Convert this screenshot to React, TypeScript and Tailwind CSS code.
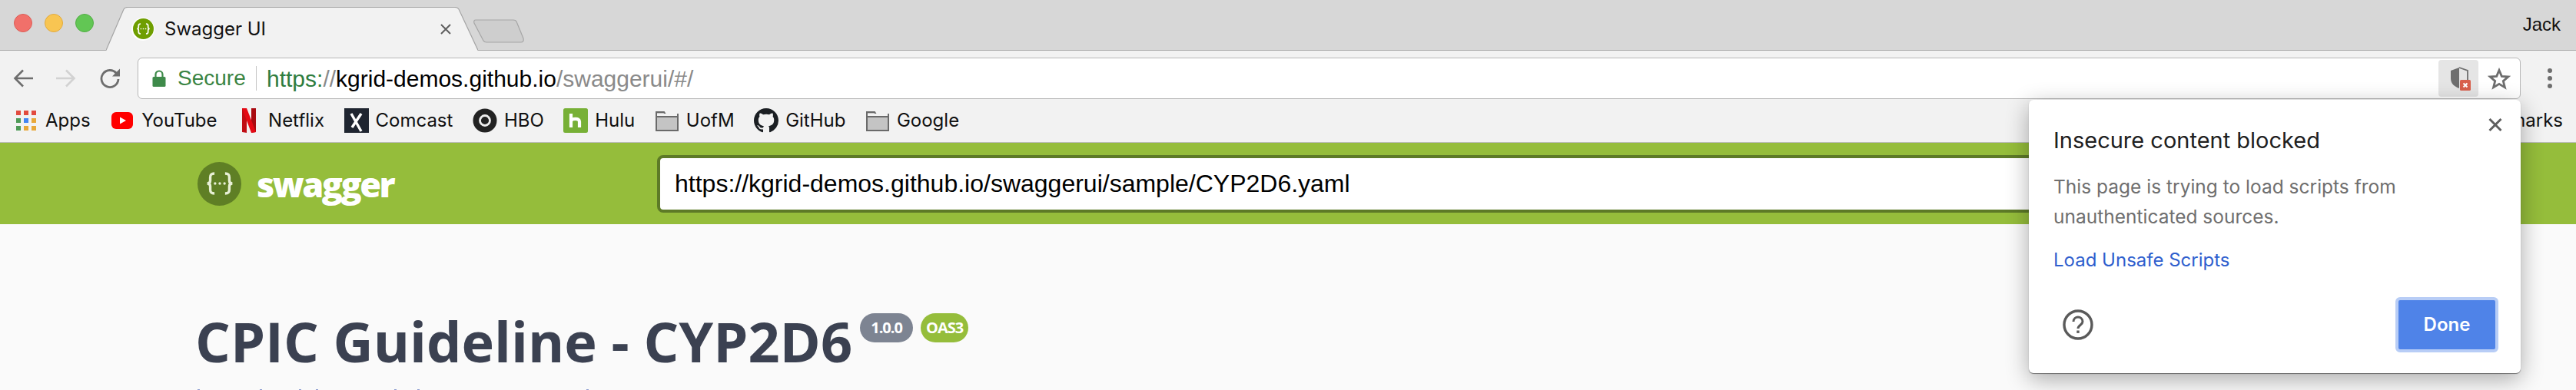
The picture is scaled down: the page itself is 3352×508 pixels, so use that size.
import React from "react";

function Braces({ color, className }: { color: string; className?: string }) {
  return (
    <svg viewBox="0 0 30 30" className={className} fill="none">
      <path d="M10.5 6.5c-3 0-3.6 1.2-3.6 3.4v2.6c0 1.5-.8 2.5-2.6 2.5 1.8 0 2.6 1 2.6 2.5v2.6c0 2.2.6 3.4 3.6 3.4" stroke={color} strokeWidth="2.2" />
      <path d="M19.5 6.5c3 0 3.6 1.2 3.6 3.4v2.6c0 1.5.8 2.5 2.6 2.5-1.8 0-2.6 1-2.6 2.5v2.6c0 2.2-.6 3.4-3.6 3.4" stroke={color} strokeWidth="2.2" />
      <circle cx="11" cy="15" r="1.1" fill={color} />
      <circle cx="15" cy="15" r="1.1" fill={color} />
      <circle cx="19" cy="15" r="1.1" fill={color} />
    </svg>
  );
}

function Folder() {
  return (
    <svg viewBox="0 0 32 32" className="w-[32px] h-[32px]">
      <path d="M2 5h10l2 3h16v21H2z" fill="#c4c4c4" stroke="#6a6a6a" strokeWidth="2" />
      <path d="M2 11h28" stroke="#6a6a6a" strokeWidth="2" />
      <rect x="3" y="7" width="26" height="3" fill="#f2f2f2" />
    </svg>
  );
}

function Bookmark({ icon, label, className }: { icon: React.ReactNode; label: string; className?: string }) {
  return (
    <div className={"flex items-center gap-[9px] " + (className || "")}>
      <div className="w-[32px] h-[32px] shrink-0 flex items-center justify-center">{icon}</div>
      <span className="text-[24px] text-[#111] whitespace-nowrap">{label}</span>
    </div>
  );
}

const appColors = ["#e24b3f", "#e24b3f", "#e24b3f", "#4e9a57", "#4285f4", "#e8a83a", "#4e9a57", "#e8a83a", "#e8a83a"];

export default function App() {
  return (
    <div className="relative w-[3352px] h-[508px] overflow-hidden bg-[#fafafa] flex flex-col font-['Inter',sans-serif]">
      {/* Tab strip */}
      <div className="h-[66px] shrink-0 bg-[#d7d7d7] border-b border-[#a9a9a9] flex items-start">
        <div className="flex gap-[16px] pl-[18px] pt-[18px]">
          <div className="w-[24px] h-[24px] rounded-full bg-[#f1706a] border border-[#dc5f58]" />
          <div className="w-[24px] h-[24px] rounded-full bg-[#f8c552] border border-[#e2ab3e]" />
          <div className="w-[24px] h-[24px] rounded-full bg-[#62c654] border border-[#52ae45]" />
        </div>
        <div className="relative ml-[16px] mt-[9px] w-[484px] h-[57px] shrink-0">
          <svg viewBox="0 0 484 57" className="absolute inset-0 w-[484px] h-[57px]">
            <path d="M0 57 L23 3 Q24.5 0.5 28 0.5 L454 0.5 Q457.5 0.5 459 3 L484 57 Z" fill="#f2f2f2" />
            <path d="M0 56.5 L23 3 Q24.5 0.5 28 0.5 L454 0.5 Q457.5 0.5 459 3 L484 56.5" fill="none" stroke="#a5a5a5" strokeWidth="1.2" />
          </svg>
          <div className="relative h-full flex items-center pl-[33px]">
            <div className="w-[30px] h-[30px] rounded-full bg-white flex items-center justify-center shrink-0">
              <div className="w-[27px] h-[27px] rounded-full bg-[#6f9e00] flex items-center justify-center">
                <Braces color="#ffffff" className="w-[23px] h-[23px]" />
              </div>
            </div>
            <span className="ml-[13px] text-[24px] text-[#111] whitespace-nowrap">Swagger UI</span>
            <svg viewBox="0 0 14 14" className="ml-auto mr-[35px] w-[14px] h-[14px]">
              <path d="M1 1L13 13M13 1L1 13" stroke="#5f5f5f" strokeWidth="2" />
            </svg>
          </div>
        </div>
        <svg viewBox="0 0 66 32" className="mt-[25px] -ml-[6px] w-[66px] h-[32px] shrink-0">
          <path d="M3 1 L52 1 Q55 1 56 3 L65 25 Q66 30 62 30 L17 30 Q14 30 13 28 L1 5 Q0 1 3 1 Z" fill="#cecece" stroke="#a6a6a6" strokeWidth="1.2" />
        </svg>
        <span className="ml-auto mr-[20px] mt-[18px] text-[24px] leading-[28px] text-[#111] font-['Liberation_Sans',sans-serif]">Jack</span>
      </div>

      {/* Toolbar */}
      <div className="h-[63px] shrink-0 bg-[#f2f2f2] pt-[9px] pl-[17px] flex items-center">
        <svg viewBox="0 0 26 24" className="w-[26px] h-[24px] shrink-0" fill="none" stroke="#6e6e6e" strokeWidth="2.6">
          <path d="M26 12H3M13 1.5L2.5 12 13 22.5" />
        </svg>
        <svg viewBox="0 0 26 24" className="ml-[30px] w-[26px] h-[24px] shrink-0" fill="none" stroke="#d2d2d2" strokeWidth="2.6">
          <path d="M0 12H23M13 1.5L23.5 12 13 22.5" />
        </svg>
        <svg viewBox="0 0 28 26" className="ml-[30px] w-[28px] h-[26px] shrink-0" fill="none">
          <path d="M22.5 6.5A11 11 0 1 0 25 14" stroke="#6e6e6e" strokeWidth="2.8" />
          <path d="M27 0.5V10.5H17Z" fill="#6e6e6e" />
        </svg>
        <div className="ml-[22px] w-[3101px] h-[54px] shrink-0 bg-white border border-[#b7b7b7] rounded-[6px] flex items-center pl-[18px] pr-[12px] relative">
          <svg viewBox="0 0 18 22" className="w-[18px] h-[22px] shrink-0">
            <path d="M4.5 9V6a4.5 4.5 0 0 1 9 0v3" fill="none" stroke="#3e8a4a" strokeWidth="2.2" />
            <rect x="0.5" y="9" width="17" height="13" rx="1.5" fill="#3e8a4a" />
          </svg>
          <span className="ml-[15px] text-[28px] text-[#3a8443] font-['Liberation_Sans',sans-serif] w-[102px]">Secure</span>
          <div className="w-px h-[32px] bg-[#c4c4c4]" />
          <span className="ml-[13px] text-[30px] whitespace-nowrap font-['Liberation_Sans',sans-serif]">
            <span className="text-[#2f7d3e]">https:</span>
            <span className="text-[#8a8a8a]">//</span>
            <span className="text-black">kgrid-demos.github.io</span>
            <span className="text-[#8a8a8a]">/swaggerui/#/</span>
          </span>
          <div className="ml-auto w-[52px] h-[48px] rounded-[4px] bg-[#e5e5e5] flex items-center justify-center relative -mr-[1px]">
            <svg viewBox="0 0 52 48" className="w-[52px] h-[48px]">
              <path d="M27 10 L16 14 V24 C16 31 21 35 27 37Z" fill="#6e6e6e" />
              <path d="M27 10 L38 14 V26" fill="none" stroke="#6e6e6e" strokeWidth="1.8" />
              <rect x="28" y="26" width="14" height="14" rx="1.5" fill="#d9604c" />
              <path d="M32.5 30.5L37.5 35.5M37.5 30.5L32.5 35.5" stroke="#fff" strokeWidth="2" />
            </svg>
          </div>
          <svg viewBox="0 0 30 29" className="ml-[13px] w-[30px] h-[29px] shrink-0" fill="none" stroke="#6e6e6e" strokeWidth="2.8">
            <path d="M15 3.5L18.3 11.4 26.8 12 20.3 17.6 22.4 25.9 15 21.4 7.6 25.9 9.7 17.6 3.2 12 11.7 11.4Z" />
          </svg>
        </div>
        <div className="ml-[35px] flex flex-col gap-[4px] w-[6px] shrink-0">
          <div className="w-[6px] h-[6px] rounded-full bg-[#6e6e6e]" />
          <div className="w-[6px] h-[6px] rounded-full bg-[#6e6e6e]" />
          <div className="w-[6px] h-[6px] rounded-full bg-[#6e6e6e]" />
        </div>
      </div>

      {/* Bookmarks bar */}
      <div className="h-[57px] shrink-0 bg-[#f2f2f2] border-b border-[#bdbdbd] pl-[18px] pr-[17px] flex items-center gap-[25.5px]">
        <Bookmark
          label="Apps"
          icon={
            <div className="grid grid-cols-3 gap-[4px] w-[26px]">
              {appColors.map((c, i) => (
                <div key={i} className="w-[6px] h-[6px]" style={{ backgroundColor: c }} />
              ))}
            </div>
          }
        />
        <Bookmark
          label="YouTube"
          icon={
            <svg viewBox="0 0 28 22" className="w-[28px] h-[22px]">
              <rect width="28" height="22" rx="6" fill="#f00" />
              <path d="M11 6.5L19 11 11 15.5Z" fill="#fff" />
            </svg>
          }
        />
        <Bookmark
          label="Netflix"
          icon={
            <svg viewBox="0 0 18 32" className="w-[18px] h-[32px]">
              <path d="M0 0H6V32L0 31Z" fill="#c00d14" />
              <path d="M12 0H18V31L12 32Z" fill="#a90a10" />
              <path d="M0 0H6L18 31 12 32Z" fill="#e50914" />
            </svg>
          }
        />
        <Bookmark
          label="Comcast"
          icon={
            <svg viewBox="0 0 32 32" className="w-[32px] h-[32px]">
              <rect width="32" height="32" fill="#1f2530" />
              <path d="M9 7L22 30M22 7L10 25" stroke="#fff" strokeWidth="3.4" fill="none" />
            </svg>
          }
        />
        <Bookmark
          label="HBO"
          icon={
            <svg viewBox="0 0 32 32" className="w-[32px] h-[32px]">
              <circle cx="16" cy="16" r="15.5" fill="#222" />
              <circle cx="16" cy="16" r="6.5" fill="none" stroke="#eee" strokeWidth="2.8" />
            </svg>
          }
        />
        <Bookmark
          label="Hulu"
          icon={
            <svg viewBox="0 0 32 32" className="w-[32px] h-[32px]">
              <rect width="32" height="32" rx="2.5" fill="#77b036" />
              <path d="M10 7V25M10 16.5C11 13.5 21 12 21 17.5V25" stroke="#fff" strokeWidth="4.2" fill="none" />
            </svg>
          }
        />
        <Bookmark label="UofM" icon={<Folder />} />
        <Bookmark
          label="GitHub"
          icon={
            <svg viewBox="0 0 16 16" className="w-[32px] h-[32px]" fill="#1b1f23">
              <path d="M8 0C3.58 0 0 3.58 0 8c0 3.54 2.29 6.53 5.47 7.59.4.07.55-.17.55-.38 0-.19-.01-.82-.01-1.49-2.01.37-2.53-.49-2.69-.94-.09-.23-.48-.94-.82-1.13-.28-.15-.68-.52-.01-.53.63-.01 1.08.58 1.23.82.72 1.21 1.87.87 2.33.66.07-.52.28-.87.51-1.07-1.78-.2-3.64-.89-3.64-3.95 0-.87.31-1.59.82-2.15-.08-.2-.36-1.02.08-2.12 0 0 .67-.21 2.2.82.64-.18 1.32-.27 2-.27.68 0 1.36.09 2 .27 1.53-1.04 2.2-.82 2.2-.82.44 1.1.16 1.92.08 2.12.51.56.82 1.27.82 2.15 0 3.07-1.87 3.75-3.65 3.95.29.25.54.73.54 1.48 0 1.07-.01 1.93-.01 2.2 0 .21.15.46.55.38A8.013 8.013 0 0 0 16 8c0-4.42-3.58-8-8-8z" />
            </svg>
          }
        />
        <Bookmark label="Google" icon={<Folder />} />
        <span className="ml-auto text-[24px] text-[#111] whitespace-nowrap">Other Bookmarks</span>
      </div>

      {/* Swagger top bar */}
      <div className="h-[106px] shrink-0 bg-[#95bd3b] pl-[257px] flex items-center">
        <div className="w-[598px] shrink-0 flex items-center">
          <div className="w-[57px] h-[57px] rounded-full bg-[#5f7f25] flex items-center justify-center">
            <Braces color="#e8f0d6" className="w-[46px] h-[46px]" />
          </div>
          <span className="ml-[20px] text-[45px] leading-none font-extrabold text-white font-['Open_Sans',sans-serif] tracking-[-2.5px]">swagger</span>
        </div>
        <div className="w-[1900px] h-[75px] shrink-0 bg-white border-[4px] border-[#5d7a27] rounded-[8px] flex items-center pl-[19px]">
          <span className="text-[32px] text-black font-['Liberation_Sans',sans-serif] whitespace-nowrap">https://kgrid-demos.github.io/swaggerui/sample/CYP2D6.yaml</span>
        </div>
      </div>

      {/* Page */}
      <div className="flex-1 min-h-0 flex flex-col">
        <div className="pl-[254px] pt-[116px] flex items-start">
          <h1 className="text-[72px] leading-[72px] font-bold text-[#3b4151] font-['Open_Sans',sans-serif] whitespace-nowrap">CPIC Guideline - CYP2D6</h1>
          <span className="ml-[10px] h-[38px] w-[69px] rounded-[19px] bg-[#7d8492] text-white text-[20px] font-bold flex items-center justify-center font-['Open_Sans',sans-serif] tracking-[-1px]">1.0.0</span>
          <span className="ml-[10px] h-[38px] w-[62px] rounded-[19px] bg-[#95bd3b] text-white text-[20px] font-bold flex items-center justify-center font-['Open_Sans',sans-serif] tracking-[-1px]">OAS3</span>
        </div>
        <svg viewBox="0 0 800 1" className="mt-auto ml-[240px] w-[800px] h-[1px] shrink-0">
          {[17, 98, 149, 171, 273, 303, 523].map((x) => (
            <rect key={x} x={x} y="0" width="3" height="1" fill="#8a9ad0" />
          ))}
        </svg>
      </div>

      {/* Bubble */}
      <div className="absolute left-[2640px] top-[130px] w-[640px] h-[356px] bg-white rounded-[6px] shadow-[0_1px_1px_rgba(0,0,0,0.45),0_8px_30px_rgba(0,0,0,0.32)] px-[32px] pt-[34px]">
        <svg viewBox="0 0 18 18" className="absolute right-[24px] top-[23px] w-[18px] h-[19px]">
          <path d="M1.5 1.5L16.5 16.5M16.5 1.5L1.5 16.5" stroke="#5f5f5f" strokeWidth="3" />
        </svg>
        <div className="text-[29px] leading-[38px] text-[#202020]">Insecure content blocked</div>
        <div className="mt-[22px] text-[24.5px] leading-[39px] text-[#6f6f6f]">
          This page is trying to load scripts from
          <br />
          unauthenticated sources.
        </div>
        <div className="mt-[17px] text-[24px] leading-[39px] text-[#2f5fce]">Load Unsafe Scripts</div>
        <div className="mt-[29px] flex items-center justify-between pl-[12px]">
          <svg viewBox="0 0 40 40" className="w-[40px] h-[40px]" fill="none">
            <circle cx="20" cy="20" r="18" stroke="#5a5a5a" strokeWidth="3.4" />
            <path d="M14 16c0-8 12-8 12 0 0 4-6 4.5-6 9" stroke="#5a5a5a" strokeWidth="3" />
            <rect x="18.3" y="27.5" width="3.4" height="3.4" fill="#5a5a5a" />
          </svg>
          <div className="-mr-[3px] w-[134px] h-[72px] rounded-[6px] bg-[#4f83e8] border-[4px] border-[#b8cdf6] flex items-center justify-center text-white text-[24px] font-semibold">Done</div>
        </div>
      </div>
    </div>
  );
}
